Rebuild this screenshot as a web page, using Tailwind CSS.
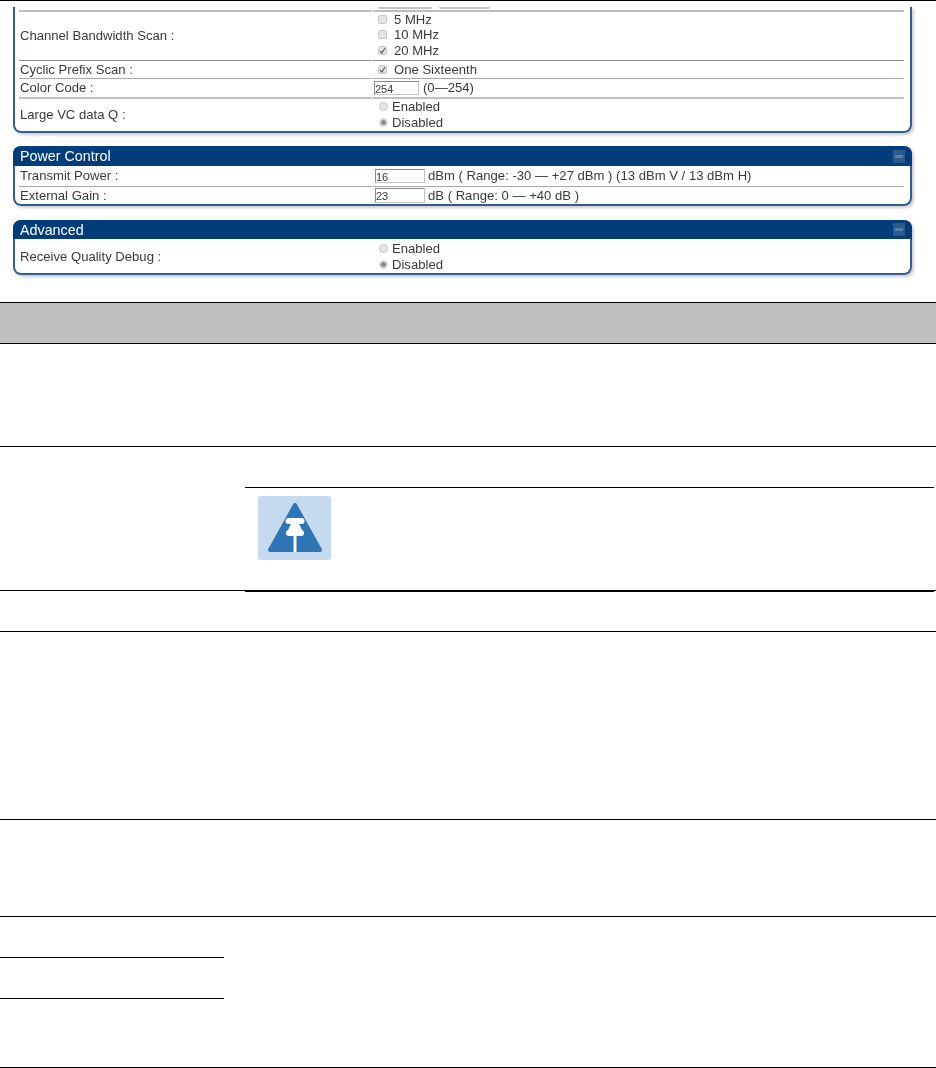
<!DOCTYPE html>
<html lang="en">

<head>
    <meta charset="UTF-8">
    <meta name="viewport" content="width=device-width, initial-scale=1.0">
    <script src="https://cdn.jsdelivr.net/npm/@tailwindcss/browser@4"></script>
</head>

<body class="bg-white font-['Liberation_Sans',Arial,sans-serif]">
    <div class="w-[936px] h-[1068px] overflow-hidden border-t border-black">
        <!-- screenshot part -->
        <div class="pl-[13px] pr-[24px] pt-[6px] text-[13.1px] leading-[16px] text-[#3a3a3a] h-[301px] blur-[0.45px]">
            <section class="h-[126px] border-x-2 border-b-2 border-[#2f5f94] rounded-b-lg pl-1 pr-[6px] shadow-[2px_2px_3px_rgba(0,0,0,0.2)]">
                <div class="flex gap-[7px] pl-[359px] h-[3px] overflow-hidden">
                    <div class="w-[54px] h-[2px] bg-[#c4c4c4] rounded-b"></div>
                    <div class="w-[51px] h-[2px] bg-[#c4c4c4] rounded-b"></div>
                </div>
                <div class="flex gap-px h-[50px]">
                    <div class="w-[353px] border-t-2 border-[#bdbdbd] pl-px flex items-center">Channel Bandwidth Scan :</div>
                    <div class="flex-1 border-t-2 border-[#bdbdbd] pl-[5px]">
                        <div class="flex items-center h-[15.5px] gap-[7px]"><span class="w-[9px] h-[9px] -mt-px rounded-[2px] border border-[#c8c8c8] bg-[#e4e4e4]"></span>5 MHz</div>
                        <div class="flex items-center h-[15.5px] gap-[7px]"><span class="w-[9px] h-[9px] -mt-px rounded-[2px] border border-[#c8c8c8] bg-[#e4e4e4]"></span>10 MHz</div>
                        <div class="flex items-center h-[15.5px] gap-[7px]"><span class="w-[9px] h-[9px] -mt-px rounded-[2px] border border-[#c8c8c8] bg-[#e4e4e4] flex items-center justify-center"><svg width="7" height="7" viewBox="0 0 7 7"><path d="M1 4 L3 6 L6 1" fill="none" stroke="#666" stroke-width="1.3" /></svg></span>20 MHz</div>
                    </div>
                </div>
                <div class="flex gap-px h-[18px]">
                    <div class="w-[353px] border-t border-[#8c8c8c] pl-px flex items-center">Cyclic Prefix Scan :</div>
                    <div class="flex-1 border-t border-[#8c8c8c] pl-[5px] flex items-center gap-[7px]"><span class="w-[9px] h-[9px] -mt-px rounded-[2px] border border-[#c8c8c8] bg-[#e4e4e4] flex items-center justify-center"><svg width="7" height="7" viewBox="0 0 7 7"><path d="M1 4 L3 6 L6 1" fill="none" stroke="#666" stroke-width="1.3" /></svg></span>One Sixteenth</div>
                </div>
                <div class="flex gap-px h-[19px]">
                    <div class="w-[353px] border-t border-[#a8a8a8] pl-px flex items-center">Color Code :</div>
                    <div class="flex-1 border-t border-[#a8a8a8] pl-px flex items-center gap-[4px]"><span class="w-[45px] h-[14px] -mt-px border border-[#c4c4c4] border-t-[#8a8a8a] border-l-[#8a8a8a] text-[11px] leading-[14px]">254</span>(0—254)</div>
                </div>
                <div class="flex gap-px h-[34px]">
                    <div class="w-[353px] border-t-2 border-[#c0c0c0] pl-px flex items-center">Large VC data Q :</div>
                    <div class="flex-1 border-t-2 border-[#c0c0c0] pl-[6px]">
                        <div class="flex items-center h-[16px] gap-[4px]"><span class="w-[9px] h-[9px] -mt-px rounded-full border border-[#c8c8c8] bg-[#e4e4e4]"></span>Enabled</div>
                        <div class="flex items-center h-[16px] gap-[4px]"><span class="w-[9px] h-[9px] -mt-px rounded-full border-2 border-[#d8d8d8] bg-[#8a8a8a]"></span>Disabled</div>
                    </div>
                </div>
            </section>

            <section class="mt-[13px] h-[60px] border-x-2 border-b-2 border-[#2f5f94] rounded-lg shadow-[2px_2px_3px_rgba(0,0,0,0.2)]">
                <div class="h-[20px] -mx-[2px] bg-[#013d7a] rounded-t-lg flex items-center justify-between pl-[7px] pr-[7px] text-[14.3px] text-white">Power Control<span class="w-[12px] h-[13px] bg-[#2a5a8f] flex items-center justify-center"><span class="w-[8px] h-[3px] bg-[#5a7fa6]"></span></span></div>
                <div class="pl-1 pr-[6px]">
                    <div class="flex gap-px h-[20px]">
                        <div class="w-[353px] pl-px flex items-center">Transmit Power :</div>
                        <div class="flex-1 pl-[2px] flex items-center gap-[3px]"><span class="w-[50px] h-[14px] border border-[#c4c4c4] border-t-[#8a8a8a] border-l-[#8a8a8a] text-[11px] leading-[15px]">16</span>dBm ( Range: -30 — +27 dBm ) (13 dBm V / 13 dBm H)</div>
                    </div>
                    <div class="flex gap-px h-[18px]">
                        <div class="w-[353px] border-t border-[#a8a8a8] pl-px flex items-center">External Gain :</div>
                        <div class="flex-1 border-t border-[#a8a8a8] pl-[2px] flex items-center gap-[3px]"><span class="w-[50px] h-[15px] border border-[#c4c4c4] border-t-[#8a8a8a] border-l-[#8a8a8a] text-[11px] leading-[15px]">23</span>dB ( Range: 0 — +40 dB )</div>
                    </div>
                </div>
            </section>

            <section class="mt-[14px] h-[55px] border-x-2 border-b-2 border-[#2f5f94] rounded-lg shadow-[2px_2px_3px_rgba(0,0,0,0.2)]">
                <div class="h-[19px] -mx-[2px] bg-[#013d7a] rounded-t-lg flex items-center justify-between pl-[7px] pr-[7px] text-[14.3px] text-white">Advanced<span class="w-[12px] h-[13px] bg-[#2a5a8f] flex items-center justify-center"><span class="w-[8px] h-[3px] bg-[#5a7fa6]"></span></span></div>
                <div class="flex gap-px h-[34px] items-center pl-1 pr-[6px] pt-[2px]">
                    <div class="w-[353px] pl-px">Receive Quality Debug :</div>
                    <div class="flex-1 pl-[6px]">
                        <div class="flex items-center h-[16px] gap-[4px]"><span class="w-[9px] h-[9px] -mt-px rounded-full border border-[#c8c8c8] bg-[#e4e4e4]"></span>Enabled</div>
                        <div class="flex items-center h-[16px] gap-[4px]"><span class="w-[9px] h-[9px] -mt-px rounded-full border-2 border-[#d8d8d8] bg-[#8a8a8a]"></span>Disabled</div>
                    </div>
                </div>
            </section>
        </div>

        <!-- table, rows are empty in the picture -->
        <div class="h-[42px] bg-[#bfbfbf] border-y border-black"></div>
        <div class="h-[103px] border-b border-black"></div>
        <div class="flex h-[144px] border-b border-black">
            <div class="w-[245px]"></div>
            <div class="flex-1 mt-[40px] mr-[2px]">
                <div class="h-[105px] border-t border-b-2 border-black pl-[13px] pt-[8px]">
                    <div class="w-[73px] h-[64px] rounded-[3px] bg-[#c5d9f1] blur-[0.4px]">
                        <svg width="73" height="64" viewBox="0 0 73 64">
                            <path d="M37 9 L62 54 L12 54 Z" fill="#2e75b6" stroke="#2e75b6" stroke-width="4" stroke-linejoin="round" />
                            <rect x="27.5" y="22" width="19" height="6" rx="3" fill="#fff" />
                            <path d="M33 28 h8 l3 6 h-14 z" fill="#fff" />
                            <rect x="28" y="34" width="18" height="6" rx="3" fill="#fff" />
                            <rect x="35.5" y="40" width="3" height="16" fill="#fff" />
                        </svg>
                    </div>
                </div>
            </div>
        </div>
        <div class="h-[41px] border-b border-black"></div>
        <div class="h-[188px] border-b border-black"></div>
        <div class="h-[97px] border-b border-black"></div>
        <div class="flex h-[151px] border-b border-black">
            <div class="w-[224px]">
                <div class="h-[41px] border-b border-black"></div>
                <div class="h-[41px] border-b border-black"></div>
            </div>
        </div>
    </div>
</body>

</html>
